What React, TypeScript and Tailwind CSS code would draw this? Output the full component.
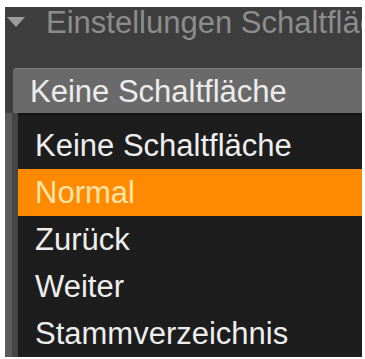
const items = ["Keine Schaltfläche", "Normal", "Zurück", "Weiter", "Stammverzeichnis"];

export default function App() {
  const selected = "Normal";

  return (
    <div
      className="w-[365px] h-[359px] bg-white pl-[5px] pt-[7px] overflow-hidden"
      style={{ fontFamily: '"Liberation Sans", Arial, sans-serif' }}
    >
      <div className="w-[357px] h-[350px] bg-[#3e3e3e] overflow-hidden flex flex-col">
        {/* header */}
        <div className="flex items-start h-[32px] whitespace-nowrap">
          <svg width="18" height="10" viewBox="0 0 18 10" className="ml-[2px] mt-[10px] shrink-0">
            <polygon points="0,0 18,0 9,10" fill="#9c9c9c" />
          </svg>
          <span className="ml-[21px] text-[31px] leading-[32px] text-[#8d8d8d]">
            Einstellungen Schaltfläche
          </span>
        </div>

        {/* select */}
        <div className="mt-[29px] ml-[8px] h-[45px] bg-[#6a6a6a] border-t border-[#7c7c7c] rounded-tl-[3px] pl-[17px] whitespace-nowrap overflow-hidden">
          <span className="block text-[31px] leading-[45px] text-[#ececec]">Keine Schaltfläche</span>
        </div>

        {/* list */}
        <div className="flex flex-1">
          <div className="w-[7px] bg-[#5b5b5b]" />
          <div className="w-[6px] bg-[#464646]" />
          <div className="flex-1 bg-[#1d1d1d] border-t-2 border-[#141414] pt-[7px]">
            {items.map((it) => (
              <div
                key={it}
                className={`h-[47px] pl-[17px] text-[31px] leading-[47px] whitespace-nowrap ${
                  it === selected ? "bg-[#ff8a00] text-[#f7e4a6]" : "text-[#eeeeee]"
                }`}
              >
                {it}
              </div>
            ))}
          </div>
        </div>
      </div>
    </div>
  );
}
